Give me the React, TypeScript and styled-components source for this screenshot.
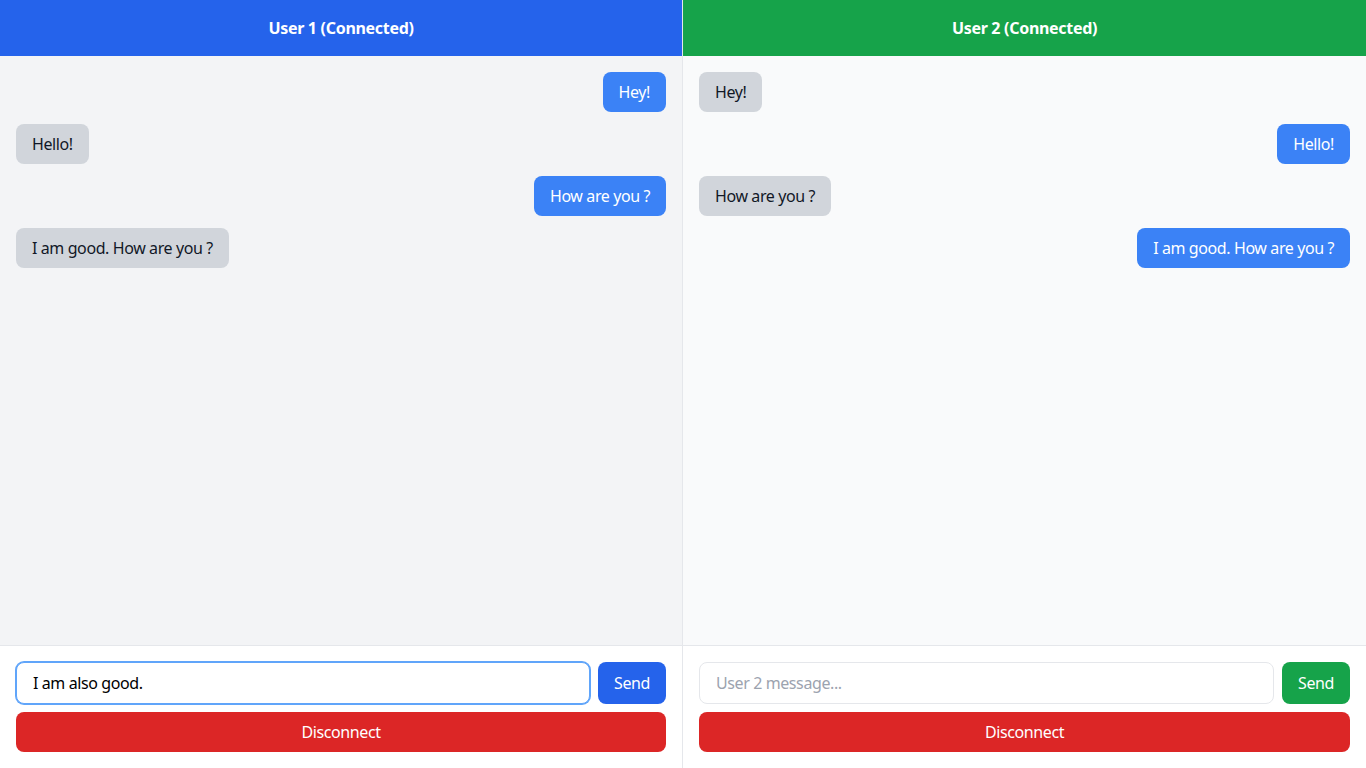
import React from "react";
import styled, { createGlobalStyle } from "styled-components";

const Global = createGlobalStyle`
  html, body { margin: 0; padding: 0; }
  body { font-family: "Noto Sans", "Open Sans", sans-serif; }
  * { box-sizing: border-box; }
`;

const Page = styled.div`
  display: grid;
  grid-template-columns: 1fr 1fr;
  height: 768px;
  width: 1366px;
`;

const Panel = styled.section<{ $divider?: boolean }>`
  display: flex;
  flex-direction: column;
  min-height: 0;
  border-right: ${(p) => (p.$divider ? "1px solid #e5e7eb" : "none")};
`;

const Header = styled.header<{ $bg: string }>`
  background: ${(p) => p.$bg};
  color: #fff;
  font-weight: 700;
  font-size: 16px;
  line-height: 24px;
  padding: 16px;
  text-align: center;
  letter-spacing: -0.3px;
`;

const Messages = styled.div<{ $bg: string }>`
  flex: 1;
  background: ${(p) => p.$bg};
  padding: 16px;
  display: flex;
  flex-direction: column;
  gap: 12px;
`;

const Row = styled.div<{ $mine: boolean }>`
  display: flex;
  justify-content: ${(p) => (p.$mine ? "flex-end" : "flex-start")};
`;

const Bubble = styled.div<{ $mine: boolean }>`
  padding: 8px 16px;
  border-radius: 8px;
  font-size: 16px;
  line-height: 24px;
  letter-spacing: -0.4px;
  background: ${(p) => (p.$mine ? "#3b82f6" : "#d1d5db")};
  color: ${(p) => (p.$mine ? "#fff" : "#111827")};
`;

const Footer = styled.div`
  background: #fff;
  border-top: 1px solid #e5e7eb;
  padding: 16px;
  display: flex;
  flex-direction: column;
  gap: 8px;
`;

const InputRow = styled.div`
  display: flex;
  gap: 8px;
`;

const Input = styled.input<{ $focused?: boolean }>`
  flex: 1;
  height: 42px;
  padding: 8px 16px;
  font-family: inherit;
  font-size: 16px;
  letter-spacing: -0.4px;
  color: #000;
  border-radius: 8px;
  border: 1px solid ${(p) => (p.$focused ? "#60a5fa" : "#e5e7eb")};
  box-shadow: ${(p) => (p.$focused ? "0 0 0 1px #60a5fa" : "none")};
  outline: none;
  &::placeholder { color: #9ca3af; }
`;

const Button = styled.button<{ $bg: string; $full?: boolean }>`
  background: ${(p) => p.$bg};
  color: #fff;
  border: none;
  border-radius: 8px;
  padding: 8px 16px;
  font-family: inherit;
  font-size: 16px;
  line-height: 24px;
  letter-spacing: -0.4px;
  height: ${(p) => (p.$full ? "40px" : "42px")};
  width: ${(p) => (p.$full ? "100%" : "auto")};
  cursor: pointer;
`;

type Msg = { text: string; mine: boolean };

const ChatPanel = ({
  title,
  headerBg,
  areaBg,
  sendBg,
  msgs,
  value,
  placeholder,
  focused,
  divider,
}: {
  title: string;
  headerBg: string;
  areaBg: string;
  sendBg: string;
  msgs: Msg[];
  value?: string;
  placeholder: string;
  focused?: boolean;
  divider?: boolean;
}) => (
  <Panel $divider={divider}>
    <Header $bg={headerBg}>{title}</Header>
    <Messages $bg={areaBg}>
      {msgs.map((m, i) => (
        <Row key={i} $mine={m.mine}>
          <Bubble $mine={m.mine}>{m.text}</Bubble>
        </Row>
      ))}
    </Messages>
    <Footer>
      <InputRow>
        <Input
          $focused={focused}
          defaultValue={value}
          placeholder={placeholder}
        />
        <Button $bg={sendBg}>Send</Button>
      </InputRow>
      <Button $bg="#dc2626" $full>
        Disconnect
      </Button>
    </Footer>
  </Panel>
);

const texts = ["Hey!", "Hello!", "How are you ?", "I am good. How are you ?"];

export default function App() {
  return (
    <>
      <Global />
      <Page>
        <ChatPanel
          divider
          title="User 1 (Connected)"
          headerBg="#2563eb"
          areaBg="#f3f4f6"
          sendBg="#2563eb"
          msgs={texts.map((t, i) => ({ text: t, mine: i % 2 === 0 }))}
          value="I am also good."
          placeholder="User 1 message..."
          focused
        />
        <ChatPanel
          title="User 2 (Connected)"
          headerBg="#16a34a"
          areaBg="#f9fafb"
          sendBg="#16a34a"
          msgs={texts.map((t, i) => ({ text: t, mine: i % 2 === 1 }))}
          placeholder="User 2 message..."
        />
      </Page>
    </>
  );
}
